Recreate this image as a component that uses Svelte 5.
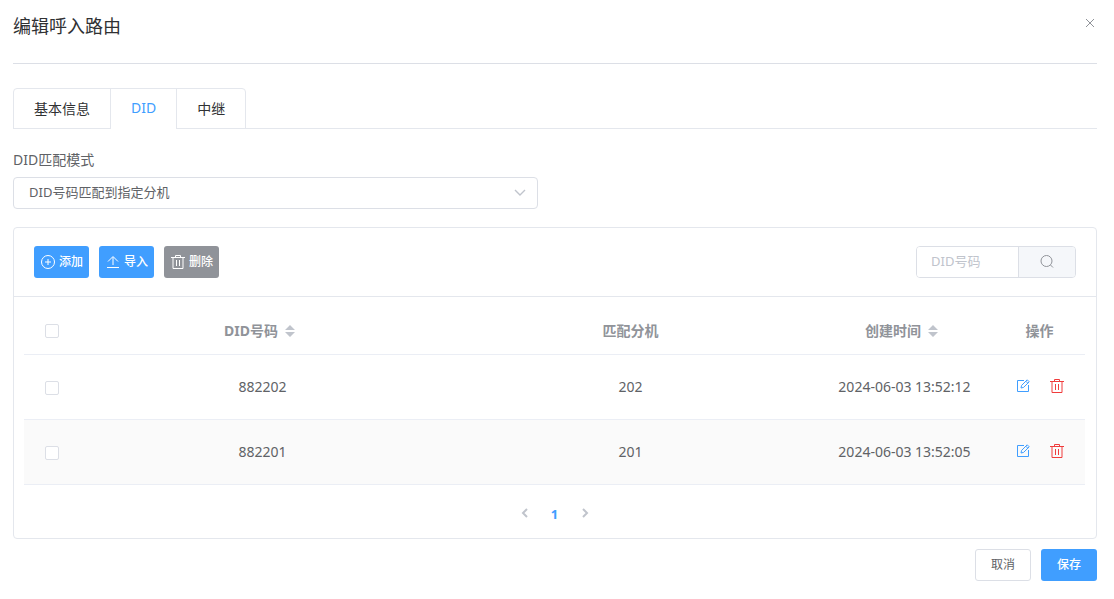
<script lang="ts">
  let tabs = ["基本信息", "DID", "中继"];
  let activeTab = $state("DID");
  let mode = $state("number");
  let keyword = $state("");

  let rows = $state([
    { did: "882202", ext: "202", time: "2024-06-03 13:52:12", checked: false },
    { did: "882201", ext: "201", time: "2024-06-03 13:52:05", checked: false },
  ]);

  let allChecked = $derived(rows.length > 0 && rows.every((r) => r.checked));

  function toggleAll() {
    const next = !allChecked;
    rows.forEach((r) => (r.checked = next));
  }
</script>

{#snippet trash()}
  <svg class="icon" viewBox="0 0 14 14" aria-hidden="true">
    <path d="M0 2.5h14M4.5 2.5v-2h5v2M2 2.5v11h10v-11M5.5 5v6M8.5 5v6" />
  </svg>
{/snippet}

{#snippet sorter()}
  <svg class="sorter" viewBox="0 0 10 12" aria-hidden="true">
    <path d="M0 5l5-5 5 5zM0 7h10l-5 5z" />
  </svg>
{/snippet}

<div class="dialog">
  <header class="dialog-header">
    <h1 class="title">编辑呼入路由</h1>
    <button class="close" aria-label="关闭">
      <svg viewBox="0 0 10 10" aria-hidden="true">
        <path d="M1 1l8 8M9 1l-8 8" />
      </svg>
    </button>
  </header>

  <nav class="tabs">
    <div class="tab-list" role="tablist">
      {#each tabs as tab}
        <button
          class="tab"
          class:active={tab === activeTab}
          role="tab"
          aria-selected={tab === activeTab}
          onclick={() => (activeTab = tab)}>{tab}</button
        >
      {/each}
    </div>
  </nav>

  <div class="field">
    <label for="mode">DID匹配模式</label>
    <div class="select-wrap">
      <select id="mode" bind:value={mode}>
        <option value="number">DID号码匹配到指定分机</option>
      </select>
      <svg class="arrow" viewBox="0 0 12 8" aria-hidden="true">
        <path d="M1 1l5 5 5-5" />
      </svg>
    </div>
  </div>

  <section class="card">
    <div class="toolbar">
      <div class="actions">
        <button class="btn tool primary">
          <svg class="icon" viewBox="0 0 14 14" aria-hidden="true">
            <circle cx="7" cy="7" r="6.5" />
            <path d="M4 7h6M7 4v6" />
          </svg>
          <span>添加</span>
        </button>
        <button class="btn tool primary">
          <svg class="icon" viewBox="0 0 14 14" aria-hidden="true">
            <path d="M1 12.5h12M7 10V2M2 6.5l5-5 5 5" />
          </svg>
          <span>导入</span>
        </button>
        <button class="btn tool info">
          {@render trash()}
          <span>删除</span>
        </button>
      </div>
      <div class="search">
        <input type="text" placeholder="DID号码" aria-label="DID号码" bind:value={keyword} />
        <button aria-label="搜索">
          <svg class="icon" viewBox="0 0 14 14" aria-hidden="true">
            <circle cx="6.5" cy="6" r="5.5" />
            <path d="M10.500 10l2.500 2.500" />
          </svg>
        </button>
      </div>
    </div>

    <div class="card-body">
      <table>
        <colgroup>
          <col class="col-check" />
          <col />
          <col />
          <col class="col-time" />
          <col class="col-ops" />
        </colgroup>
        <thead>
          <tr>
            <th>
              <input type="checkbox" aria-label="全选" checked={allChecked} onchange={toggleAll} />
            </th>
            <th>DID号码{@render sorter()}</th>
            <th>匹配分机</th>
            <th>创建时间{@render sorter()}</th>
            <th>操作</th>
          </tr>
        </thead>
        <tbody>
          {#each rows as row}
            <tr>
              <td class="check">
                <input type="checkbox" aria-label={row.did} bind:checked={row.checked} />
              </td>
              <td>{row.did}</td>
              <td>{row.ext}</td>
              <td>{row.time}</td>
              <td>
                <div class="ops">
                  <button class="edit" aria-label="编辑">
                    <svg class="icon" viewBox="0 0 14 14" aria-hidden="true">
                      <path d="M8 1.5H1.5v11h11V6" />
                      <path d="M5 9l.6-2.600 5.600-5.600 2 2-5.600 5.600zM9.800 2.200l2 2" />
                    </svg>
                  </button>
                  <button class="remove" aria-label="删除">{@render trash()}</button>
                </div>
              </td>
            </tr>
          {/each}
        </tbody>
      </table>

      <div class="pagination">
        <button aria-label="上一页" disabled>
          <svg viewBox="0 0 8 10" aria-hidden="true"><path d="M6 1L2 5l4 4" /></svg>
        </button>
        <button class="current">1</button>
        <button aria-label="下一页" disabled>
          <svg viewBox="0 0 8 10" aria-hidden="true"><path d="M2 1l4 4-4 4" /></svg>
        </button>
      </div>
    </div>
  </section>

  <footer class="dialog-footer">
    <button class="btn plain">取消</button>
    <button class="btn primary">保存</button>
  </footer>
</div>

<style>
  :global(body) {
    background: #fff;
  }
  .dialog {
    padding: 0 17px 18px 13px;
    font-family: "Noto Sans", "Noto Sans CJK SC", sans-serif;
    font-size: 14px;
    color: #606266;
  }
  .dialog * {
    box-sizing: border-box;
  }
  button,
  input,
  select {
    margin: 0;
    font-family: inherit;
  }
  button {
    padding: 0;
    border: none;
    background: none;
    cursor: pointer;
  }
  svg {
    display: block;
    fill: none;
    stroke: currentColor;
  }
  .icon {
    flex: none;
    width: 14px;
    height: 14px;
  }

  .dialog-header {
    display: flex;
    justify-content: space-between;
    align-items: flex-start;
    height: 64px;
    border-bottom: 1px solid #dcdfe6;
  }
  .title {
    margin: 14px 0 0;
    font-size: 18px;
    font-weight: 400;
    line-height: 24px;
    color: #303133;
  }
  .close {
    margin-top: 18px;
    padding: 0 2px;
    color: #909399;
  }
  .close svg {
    width: 10px;
    height: 10px;
  }

  .tabs {
    display: flex;
    margin-top: 24px;
    border-bottom: 1px solid #e4e7ed;
  }
  .tab-list {
    display: flex;
    margin-bottom: -1px;
    border: 1px solid #e4e7ed;
    border-radius: 4px 4px 0 0;
  }
  .tab {
    height: 39px;
    padding: 0 20px 2px;
    font-size: 14px;
    color: #303133;
  }
  .tab + .tab {
    border-left: 1px solid #e4e7ed;
  }
  .tab.active {
    margin-bottom: -1px;
    height: 40px;
    padding-bottom: 3px;
    background: #fff;
    color: #409eff;
  }

  .field {
    margin-top: 20px;
  }
  .field label {
    display: block;
    line-height: 22px;
    margin-bottom: 6px;
  }
  .select-wrap {
    position: relative;
    width: calc(50% - 17px);
  }
  select {
    display: block;
    width: 100%;
    height: 32px;
    padding: 0 30px 2px 15px;
    border: 1px solid #dcdfe6;
    border-radius: 4px;
    background: #fff;
    appearance: none;
    font-size: 13px;
    color: #606266;
  }
  .arrow {
    position: absolute;
    top: 12px;
    right: 12px;
    width: 12px;
    height: 8px;
    color: #c0c4cc;
    stroke-width: 1.4;
    pointer-events: none;
  }

  .card {
    margin-top: 18px;
    border: 1px solid #e4e7ed;
    border-radius: 4px;
  }
  .toolbar {
    display: flex;
    justify-content: space-between;
    padding: 18px 20px;
    border-bottom: 1px solid #e4e7ed;
  }
  .actions {
    display: flex;
    gap: 10px;
  }
  .btn {
    display: flex;
    align-items: center;
    justify-content: center;
    width: 56px;
    height: 32px;
    border-radius: 3px;
    font-size: 12px;
    font-weight: 500;
    line-height: 16px;
  }
  .tool {
    gap: 4px;
    width: 55px;
    padding-left: 1px;
  }
  .primary {
    background: #409eff;
    color: #fff;
  }
  .info {
    background: #909399;
    color: #fff;
  }
  .plain {
    border: 1px solid #dcdfe6;
    font-weight: 400;
    color: #606266;
  }
  .search {
    display: flex;
    width: 160px;
    height: 32px;
    border: 1px solid #dcdfe6;
    border-radius: 4px;
    overflow: hidden;
  }
  .search input {
    flex: 1;
    min-width: 0;
    padding: 0 14px 2px;
    border: none;
    outline: none;
    font-size: 13px;
    color: #606266;
  }
  .search input::placeholder {
    color: #c0c4cc;
  }
  .search button {
    display: flex;
    align-items: center;
    justify-content: center;
    width: 57px;
    border-left: 1px solid #dcdfe6;
    background: #f5f7fa;
    color: #909399;
  }

  .card-body {
    padding: 10px 11px 10px 10px;
  }
  table {
    width: 100%;
    border-collapse: separate;
    border-spacing: 0;
    table-layout: fixed;
  }
  .col-check {
    width: 55px;
  }
  .col-time {
    width: 180px;
  }
  .col-ops {
    width: 90px;
  }
  th,
  td {
    padding: 0 1px 2px 0;
    border-bottom: 1px solid #ebeef5;
    text-align: center;
    vertical-align: middle;
  }
  th {
    height: 48px;
    font-weight: 700;
    color: #909399;
  }
  td {
    height: 65px;
  }
  th:first-child,
  .check {
    padding: 1px 0 0;
  }
  tbody tr:nth-child(even) {
    background: #fafafa;
  }
  .sorter {
    display: inline-block;
    width: 10px;
    height: 12px;
    margin: 0 6px -1px 7px;
    fill: #c0c4cc;
    stroke: none;
  }
  input[type="checkbox"] {
    display: block;
    width: 14px;
    height: 14px;
    margin: 0 auto;
    border: 1px solid #dcdfe6;
    border-radius: 2px;
    background: #fff;
    appearance: none;
  }
  input[type="checkbox"]:checked {
    border-color: #409eff;
    background: #409eff;
  }
  .ops {
    display: flex;
    justify-content: center;
    gap: 20px;
  }
  .edit {
    color: #409eff;
  }
  .remove {
    color: #f03c3c;
  }

  .pagination {
    display: flex;
    justify-content: center;
    height: 28px;
    margin: 14px 0 1px;
  }
  .pagination button {
    display: flex;
    align-items: center;
    justify-content: center;
    width: 30px;
    font-size: 13px;
    font-weight: 700;
    color: #c0c4cc;
  }
  .pagination svg {
    width: 8px;
    height: 10px;
    stroke-width: 2;
  }
  .pagination .current {
    padding-top: 2px;
    color: #409eff;
  }

  .dialog-footer {
    display: flex;
    justify-content: flex-end;
    gap: 10px;
    margin-top: 10px;
  }
</style>
